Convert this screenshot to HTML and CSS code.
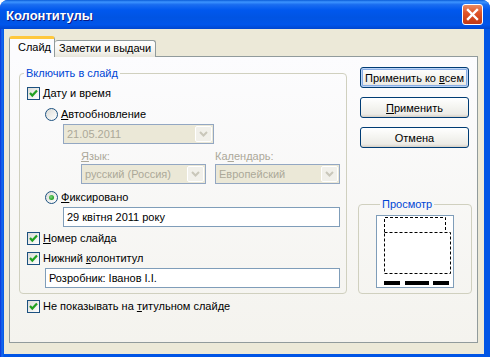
FILE: index.html
```html
<!DOCTYPE html>
<html lang="ru">
<head>
  <meta charset="UTF-8" />
  <title>Колонтитулы</title>
  <link rel="stylesheet" href="styles.css">
</head>
<body>
  <div class="window">
    <div class="titlebar">
      <span class="title">Колонтитулы</span>
      <span class="close-btn">
        <svg width="19" height="19" viewBox="0 0 19 19"><path d="M5 5 L14 14 M14 5 L5 14" stroke="#fff" stroke-width="2.4" stroke-linecap="square"/></svg>
      </span>
    </div>

    <div class="client">
      <div class="tabs">
        <div class="tab active">Слайд</div>
        <div class="tab">Заметки и выдачи</div>
      </div>

      <div class="panel">
        <div class="col-left">
          <fieldset class="group main-group">
            <legend>Включить в слайд</legend>

            <div class="row check-row lvl0">
              <span class="box checked"><svg width="11" height="11" viewBox="0 0 11 11"><path d="M2 5 L4.3 7.6 L9 2.5" fill="none" stroke="#21A121" stroke-width="2.2"/></svg></span>
              <span><u>Д</u>ату и время</span>
            </div>

            <div class="row check-row lvl1 radio-auto">
              <span class="radio"></span>
              <span><u>А</u>втообновление</span>
            </div>

            <div class="combo disabled date-combo">
              <span class="combo-text">21.05.2011</span>
              <span class="combo-arrow"><svg width="9" height="6" viewBox="0 0 9 6"><path d="M1 1 L4.5 4.5 L8 1" fill="none" stroke="#C9C7BA" stroke-width="2"/></svg></span>
            </div>

            <div class="row labels">
              <span class="lbl-lang"><u>Я</u>зык:</span>
              <span class="lbl-cal">Ка<u>л</u>ендарь:</span>
            </div>

            <div class="row combos">
              <div class="combo disabled small-combo">
                <span class="combo-text">русский (Россия)</span>
                <span class="combo-arrow"><svg width="9" height="6" viewBox="0 0 9 6"><path d="M1 1 L4.5 4.5 L8 1" fill="none" stroke="#C9C7BA" stroke-width="2"/></svg></span>
              </div>
              <div class="combo disabled small-combo">
                <span class="combo-text">Европейский</span>
                <span class="combo-arrow"><svg width="9" height="6" viewBox="0 0 9 6"><path d="M1 1 L4.5 4.5 L8 1" fill="none" stroke="#C9C7BA" stroke-width="2"/></svg></span>
              </div>
            </div>

            <div class="row check-row lvl1 radio-fixed">
              <span class="radio on"><span class="dot"></span></span>
              <span><u>Ф</u>иксировано</span>
            </div>

            <div class="textbox date-box">29 квітня 2011 року</div>

            <div class="row check-row lvl0 check-num">
              <span class="box checked"><svg width="11" height="11" viewBox="0 0 11 11"><path d="M2 5 L4.3 7.6 L9 2.5" fill="none" stroke="#21A121" stroke-width="2.2"/></svg></span>
              <span><u>Н</u>омер слайда</span>
            </div>

            <div class="row check-row lvl0 check-footer">
              <span class="box checked"><svg width="11" height="11" viewBox="0 0 11 11"><path d="M2 5 L4.3 7.6 L9 2.5" fill="none" stroke="#21A121" stroke-width="2.2"/></svg></span>
              <span>Нижний <u>к</u>олонтитул</span>
            </div>

            <div class="textbox footer-box">Розробник: Іванов І.І.</div>
          </fieldset>

          <div class="row check-row title-check">
            <span class="box checked"><svg width="11" height="11" viewBox="0 0 11 11"><path d="M2 5 L4.3 7.6 L9 2.5" fill="none" stroke="#21A121" stroke-width="2.2"/></svg></span>
            <span>Не показывать на <u>т</u>итульном слайде</span>
          </div>
        </div>

        <div class="col-right">
          <button class="btn default">Применить ко <u>в</u>сем</button>
          <button class="btn"><u>П</u>рименить</button>
          <button class="btn">Отмена</button>

          <fieldset class="group preview-group">
            <legend>Просмотр</legend>
            <div class="preview">
              <svg width="76" height="71" viewBox="0 0 76 71">
                <path d="M7.5 16 V1.5 H68.5 V16" fill="none" stroke="#000" stroke-dasharray="3 2"/>
                <rect x="7.5" y="16.5" width="66" height="41" fill="none" stroke="#000" stroke-dasharray="3 2"/>
                <rect x="7" y="65" width="16" height="4" fill="#000"/>
                <rect x="28" y="65" width="24" height="4" fill="#000"/>
                <rect x="56" y="65" width="16" height="4" fill="#000"/>
              </svg>
            </div>
          </fieldset>
        </div>
      </div>
    </div>
  </div>
</body>
</html>
```

FILE: styles.css
```css
body {
  margin: 0;
  font-family: 'Liberation Sans', Arial, sans-serif;
  font-size: 11px;
  color: #000;
  background: #fff;
}
.window {
  width: 490px;
  height: 357px;
  box-sizing: border-box;
  background: linear-gradient(to right, #0831D9, #166AEE 2px, #0055E5 4px);
  border-radius: 8px 8px 0 0;
  padding: 0 6px 3px 4px;
  display: flex;
  flex-direction: column;
}
.titlebar {
  height: 29px;
  margin: 0 -6px 0 -4px;
  border-radius: 8px 8px 0 0;
  background: linear-gradient(to bottom, #0A5CD8 0%, #3D95FF 7%, #1A6DF0 16%, #0058EE 35%, #0054E3 60%, #0055EB 85%, #0046CF 100%);
  display: flex;
  align-items: center;
  justify-content: space-between;
  padding: 0 7px 0 6px;
}
.title {
  color: #fff;
  font-weight: bold;
  font-size: 13px;
  text-shadow: 1px 1px #0A1883;
  margin-top: 1px;
}
.close-btn {
  width: 19px;
  height: 19px;
  border: 1px solid #fff;
  border-radius: 3px;
  background: linear-gradient(to bottom, #E98B63, #E0562A 40%, #CC4118 80%, #C0391A);
  display: flex;
  margin-top: -1px;
}
.client {
  flex: 1;
  background: #ECE9D8;
  padding: 7px 6px 11px 5px;
  display: flex;
  flex-direction: column;
}

/* Onglets */
.tabs {
  display: flex;
  align-items: flex-end;
  height: 21px;
  margin-bottom: -1px;
  position: relative;
  z-index: 1;
}
.tab {
  height: 16px;
  line-height: 15px;
  padding: 0 4px;
  border: 1px solid #919B9C;
  border-bottom: none;
  border-left: none;
  border-radius: 3px 3px 0 0;
  background: linear-gradient(to bottom, #FFFFFF, #F3F2EC 70%, #E6E4DA);
}
.tab.active {
  height: 20px;
  line-height: 20px;
  width: 46px;
  box-sizing: border-box;
  padding: 0 0 0 8px;
  border-left: 1px solid #919B9C;
  border-top: 3px solid #FFC83C;
  border-radius: 3px 3px 0 0;
  background: #FCFCFE;
  line-height: 17px;
  height: 21px;
}
.panel {
  flex: 1;
  border: 1px solid #919B9C;
  background: linear-gradient(to bottom, #FCFCFE, #F4F3EE);
  padding: 10px 0 0 9px;
  display: flex;
}

/* Colonne gauche */
.col-left {
  width: 328px;
}
.group {
  margin: 0;
  padding: 0 6px 5px 0;
  border: 1px solid #D0D0BF;
  border-radius: 4px;
  min-width: 0;
}
.group legend {
  color: #0046D5;
  margin-left: 4px;
  padding: 0 2px;
  line-height: 13px;
  height: 13px;
}
.main-group {
  width: 328px;
  box-sizing: border-box;
  padding-top: 7px;
}
.row {
  display: flex;
  align-items: center;
  height: 13px;
  line-height: 13px;
}
.check-row span + span {
  margin-left: 3px;
}
.lvl0 { padding-left: 7px; }
.lvl1 { padding-left: 25px; }
.radio-auto { margin-top: 8px; }
.radio-fixed { margin-top: 7px; }
.check-num { margin-top: 5px; }
.check-footer { margin-top: 7px; }
.title-check {
  margin-top: 6px;
  padding-left: 8px;
}
.box {
  width: 13px;
  height: 13px;
  box-sizing: border-box;
  border: 1px solid #1C5180;
  background: linear-gradient(135deg, #DCDCD7, #FFFFFF);
  display: flex;
  flex-shrink: 0;
}
.radio {
  width: 13px;
  height: 13px;
  box-sizing: border-box;
  border: 1px solid #1C5180;
  border-radius: 50%;
  background: linear-gradient(135deg, #DCDCD7, #FFFFFF);
  display: flex;
  align-items: center;
  justify-content: center;
  flex-shrink: 0;
}
.radio .dot {
  width: 5px;
  height: 5px;
  border-radius: 50%;
  background: radial-gradient(circle at 40% 40%, #7FD37F, #21A121 70%);
}

/* Listes deroulantes */
.combo {
  height: 20px;
  box-sizing: border-box;
  border: 1px solid #93A7C2;
  display: flex;
  align-items: center;
  justify-content: space-between;
}
.combo.disabled {
  background: #EBE8D7;
  color: #ACA899;
}
.combo-text {
  padding-left: 3px;
}
.combo-arrow {
  width: 15px;
  height: 16px;
  margin-right: 1px;
  border: 1px solid #FFFFFF;
  box-sizing: border-box;
  border-radius: 2px;
  background: #F1F0EA;
  display: flex;
  align-items: center;
  justify-content: center;
  width: 17px;
}
.date-combo {
  width: 151px;
  margin: 3px 0 0 43px;
}
.labels {
  margin-top: 6px;
  padding-left: 61px;
  color: #ACA899;
}
.lbl-lang {
  width: 134px;
}
.combos {
  height: 20px;
  margin-top: 1px;
  padding-left: 61px;
  gap: 9px;
}
.small-combo {
  width: 125px;
}

/* Champs texte */
.textbox {
  height: 20px;
  line-height: 18px;
  box-sizing: border-box;
  border: 1px solid #7F9DB9;
  background: #fff;
  padding-left: 3px;
}
.date-box {
  margin: 3px 0 0 43px;
}
.footer-box {
  margin: 3px 0 0 25px;
}

/* Colonne droite */
.col-right {
  width: 114px;
  margin-left: 11px;
  display: flex;
  flex-direction: column;
}
.btn {
  width: 109px;
  height: 21px;
  margin: 0 0 9px 2px;
  padding: 0;
  font-family: 'Liberation Sans', Arial, sans-serif;
  font-size: 11px;
  color: #000;
  border: 1px solid #003C74;
  border-radius: 3px;
  background: linear-gradient(to bottom, #FFFFFF, #F4F4F0 50%, #ECEBE6 85%, #D6D0C5);
}
.btn.default {
  box-shadow: inset 0 0 0 1px #BCD4F6, inset 0 0 0 2px #89ADE4;
}
.preview-group {
  width: 114px;
  box-sizing: border-box;
  margin-top: 41px;
  padding: 4px 0 5px 17px;
}
.preview {
  width: 78px;
  height: 73px;
  box-sizing: border-box;
  border: 1px solid #7F9DB9;
  background: #fff;
}
.preview svg {
  display: block;
}
```
